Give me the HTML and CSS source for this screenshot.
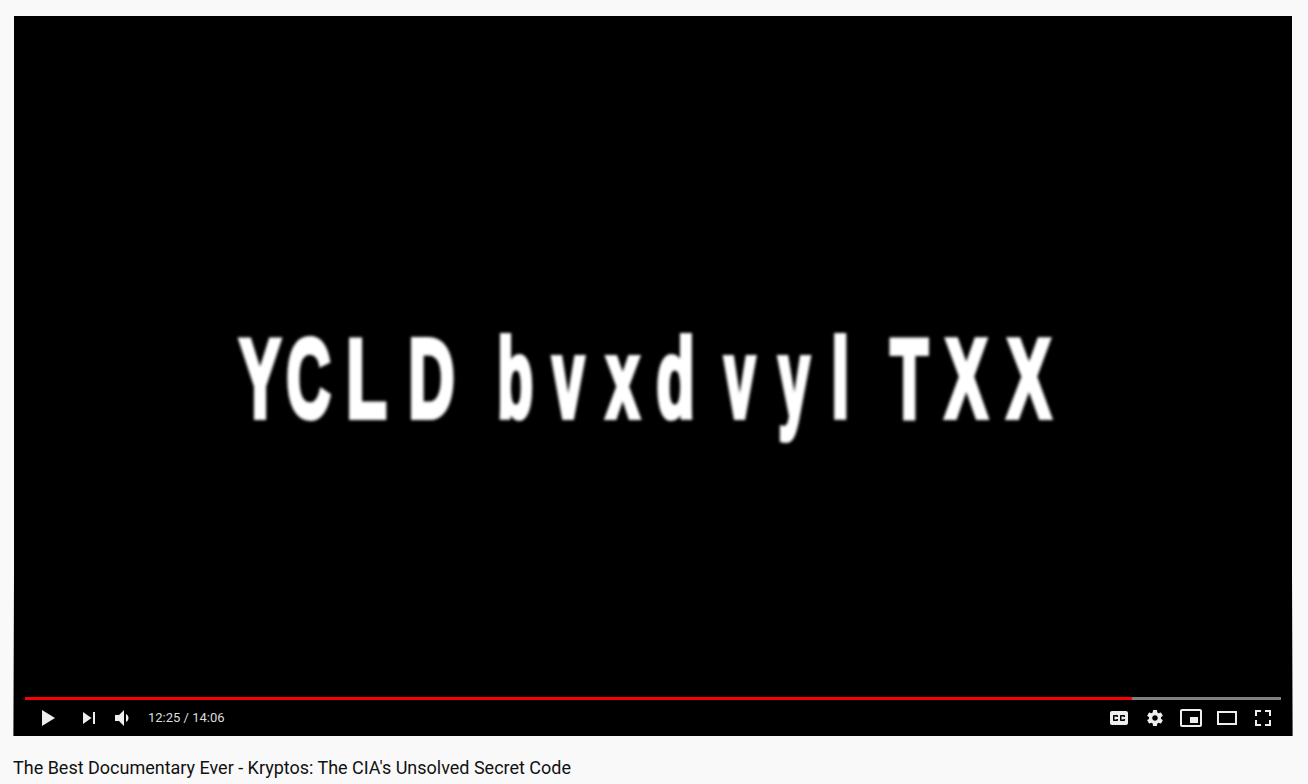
FILE: index.html
```html
<!DOCTYPE html>
<html lang="en">
<head>
<meta charset="utf-8">
<title>The Best Documentary Ever - Kryptos: The CIA's Unsolved Secret Code</title>
<link rel="stylesheet" href="styles.css">
</head>
<body>
<main class="page">
  <section class="player">
    <div class="stage">
      <svg class="frame" width="1278" height="681" viewBox="14 16 1278 681">
        <text class="frame-text" y="416.500"><tspan x="239.500" textLength="41" lengthAdjust="spacingAndGlyphs">Y</tspan><tspan x="286.500" textLength="44" lengthAdjust="spacingAndGlyphs">C</tspan><tspan x="346.500" textLength="40" lengthAdjust="spacingAndGlyphs">L</tspan><tspan x="408.500" textLength="46" lengthAdjust="spacingAndGlyphs">D</tspan><tspan x="497.500" textLength="35.500" lengthAdjust="spacingAndGlyphs">b</tspan><tspan x="552.500" textLength="31.500" lengthAdjust="spacingAndGlyphs">v</tspan><tspan x="606.500" textLength="32.500" lengthAdjust="spacingAndGlyphs">x</tspan><tspan x="656.500" textLength="38" lengthAdjust="spacingAndGlyphs">d</tspan><tspan x="724.500" textLength="30.500" lengthAdjust="spacingAndGlyphs">v</tspan><tspan x="778.500" textLength="31" lengthAdjust="spacingAndGlyphs">y</tspan><tspan x="831.500" textLength="17.500" lengthAdjust="spacingAndGlyphs">l</tspan><tspan x="890.500" textLength="37.500" lengthAdjust="spacingAndGlyphs">T</tspan><tspan x="945.500" textLength="41.500" lengthAdjust="spacingAndGlyphs">X</tspan><tspan x="1007.500" textLength="43" lengthAdjust="spacingAndGlyphs">X</tspan></text>
      </svg>
    </div>
    <div class="progress"><div class="progress-played"></div></div>
    <div class="controls">
      <button class="ctrl ctrl-play" aria-label="Play">
        <svg class="icon" viewBox="0 0 36 36"><path d="M12 26l6.500-4v-8L12 10zM18.500 22l6.500-4-6.500-4z"/></svg>
      </button>
      <button class="ctrl" aria-label="Next">
        <svg class="icon" viewBox="0 0 36 36"><path d="M12 24l8.500-6L12 12zM22 12v12h2V12z"/></svg>
      </button>
      <button class="ctrl" aria-label="Mute">
        <svg class="icon" viewBox="0 0 36 36"><path d="M8 21h4l5 5V10l-5 5H8zM19 14v8c1.480-.68 2.500-2.230 2.500-4 0-1.740-1.020-3.260-2.500-4z"/></svg>
      </button>
      <span class="time">12:25 / 14:06</span>
      <span class="spacer"></span>
      <button class="ctrl" aria-label="Subtitles">
        <svg class="icon" viewBox="0 0 36 36"><path d="M11 11C9.890 11 9 11.900 9 13v10c0 1.100.89 2 2 2h14c1.100 0 2-.9 2-2V13c0-1.100-.9-2-2-2H11zM17 17h-1.500v-.5h-2v3h2V19H17v1c0 .55-.45 1-1 1h-3c-.55 0-1-.45-1-1v-4c0-.55.45-1 1-1h3c.55 0 1 .45 1 1v1zM24 17h-1.500v-.5h-2v3h2V19H24v1c0 .55-.45 1-1 1h-3c-.55 0-1-.45-1-1v-4c0-.55.45-1 1-1h3c.55 0 1 .45 1 1v1z"/></svg>
      </button>
      <button class="ctrl" aria-label="Settings">
        <svg class="icon" viewBox="0 0 36 36"><path d="m23.940 18.780c.03-.25.05-.51.05-.78s-.02-.52-.05-.78l1.680-1.320c.15-.12.19-.33.09-.51l-1.600-2.760c-.09-.17-.31-.24-.48-.17l-1.990.8c-.41-.32-.86-.58-1.350-.78l-.30-2.120c-.02-.19-.19-.33-.39-.33h-3.200c-.2 0-.36.14-.39.33l-.30 2.120c-.48.2-.93.47-1.350.78l-1.990-.8c-.18-.07-.39 0-.48.17l-1.600 2.760c-.10.17-.05.39.09.51l1.680 1.320c-.03.25-.05.52-.05.78s.02.52.05.78l-1.680 1.320c-.15.12-.19.33-.09.51l1.600 2.760c.09.17.31.24.48.17l1.990-.8c.41.32.86.58 1.350.78l.30 2.120c.02.19.19.33.39.33h3.200c.2 0 .36-.14.39-.33l.30-2.120c.48-.2.93-.47 1.350-.78l1.990.8c.18.07.39 0 .48-.17l1.600-2.760c.09-.17.05-.39-.09-.51l-1.680-1.320zm-5.940 2.010c-1.540 0-2.800-1.250-2.800-2.800 0-1.540 1.250-2.800 2.800-2.800 1.540 0 2.800 1.250 2.800 2.800 0 1.540-1.250 2.800-2.800 2.800z"/></svg>
      </button>
      <button class="ctrl" aria-label="Miniplayer">
        <svg class="icon" viewBox="0 0 36 36"><path d="M25 17h-8v6h8zM29 25V10.980C29 9.880 28.100 9 27 9H9c-1.100 0-2 .88-2 1.980V25c0 1.100.9 2 2 2h18c1.100 0 2-.9 2-2zM27 25.020H9V10.970h18z"/></svg>
      </button>
      <button class="ctrl" aria-label="Theater mode">
        <svg class="icon icon-even" viewBox="0 0 36 36"><path d="M28 11v14H8V11zM10 13h16v10H10z"/></svg>
      </button>
      <button class="ctrl" aria-label="Full screen">
        <svg class="icon" viewBox="0 0 36 36"><path d="M10 16h2v-4h4v-2h-6zM20 10v2h4v4h2v-6zM24 24h-4v2h6v-6h-2zM12 20h-2v6h6v-2h-4z"/></svg>
      </button>
    </div>
  </section>
  <h1 class="title">The Best Documentary Ever - Kryptos: The CIA's Unsolved Secret Code</h1>
</main>
</body>
</html>
```
FILE: styles.css
```css
* { box-sizing: border-box; }
html, body { margin: 0; height: 100%; }
body {
  background: #f9f9f9;
  font-family: Roboto, "Liberation Sans", sans-serif;
  overflow: hidden;
}
.page { padding: 16px 16px 0 13px; }
.player {
  position: relative;
  width: 1278px;
  height: 720px;
  margin-left: 1px;
  background: #000;
  display: flex;
  flex-direction: column;
}
.player::before,
.player::after {
  content: "";
  position: absolute;
  bottom: 0;
  width: 1px;
  height: 160px;
  background: linear-gradient(to bottom, rgba(80, 80, 80, 0), rgba(80, 80, 80, 0.9));
}
.player::before { left: -1px; }
.player::after { right: -1px; }
.stage { height: 681px; overflow: hidden; }
.frame { display: block; filter: blur(1.4px); }
.frame-text {
  font-family: "Liberation Sans", sans-serif;
  font-weight: 700;
  font-size: 112px;
  fill: #fff;
  stroke: #fff;
  stroke-width: 6px;
}
.progress {
  height: 3px;
  margin: 0 11px;
  background: #808080;
}
.progress-played { width: 1107px; height: 100%; background: #f00; }
.controls {
  height: 36px;
  padding: 0 11px;
  display: flex;
  align-items: center;
}
.ctrl {
  width: 36px;
  height: 36px;
  padding: 0;
  border: 0;
  background: none;
  flex: none;
}
.ctrl-play { width: 46px; padding: 0 5px; }
.icon { display: block; width: 36px; height: 36px; fill: #eee; }
.icon-even { fill-rule: evenodd; }
.time {
  margin: 0 0 1px 5px;
  font-size: 13px;
  line-height: 15px;
  color: #ddd;
  white-space: nowrap;
}
.spacer { flex: 1; }
.title {
  margin: 21px 0 0;
  font-size: 18px;
  font-weight: 400;
  line-height: 22px;
  letter-spacing: -0.008px;
  color: #111;
  white-space: nowrap;
}
```
